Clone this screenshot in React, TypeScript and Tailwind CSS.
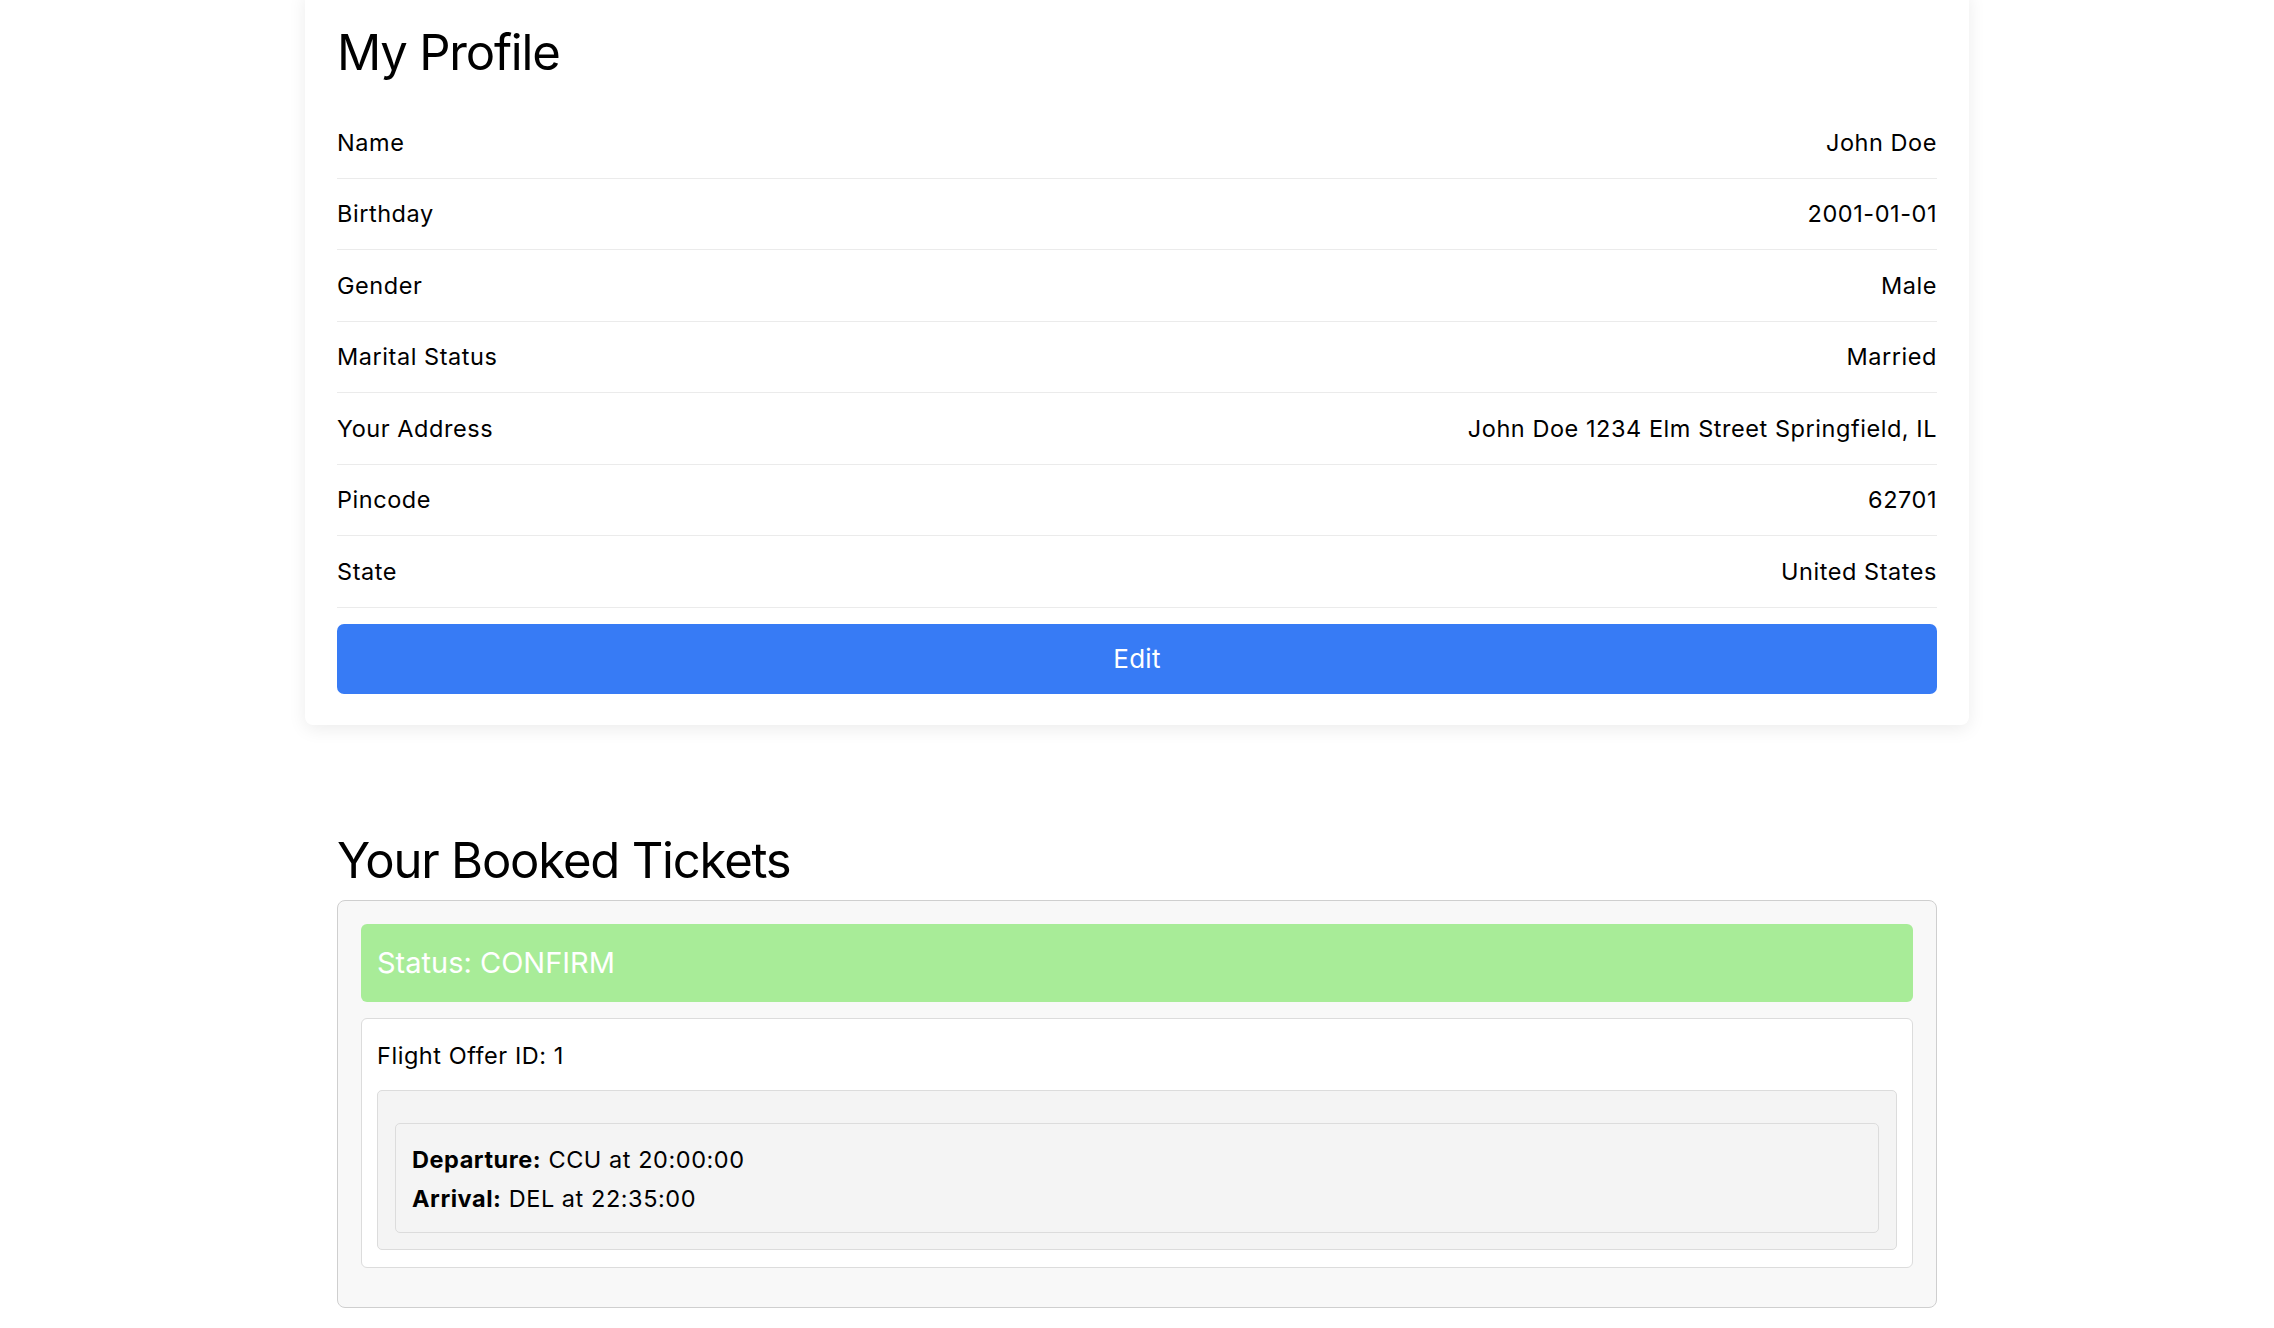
import React from "react";

const rows: [string, string][] = [
  ["Name", "John Doe"],
  ["Birthday", "2001-01-01"],
  ["Gender", "Male"],
  ["Marital Status", "Married"],
  ["Your Address", "John Doe 1234 Elm Street Springfield, IL"],
  ["Pincode", "62701"],
  ["State", "United States"],
];

export default function App() {
  return (
    <div
      className="min-h-screen bg-white text-black pb-[40px]"
      style={{ fontFamily: "Inter, 'Noto Sans', Arial, sans-serif" }}
    >
      <div className="w-[1664px] mx-auto -mt-[10px] bg-white rounded-[8px] shadow-[0_4px_18px_rgba(0,0,0,0.08)] px-[32px] pt-[32px] pb-[31px]">
        <h1 className="m-0 text-[49px] leading-[62px] font-normal tracking-[-1.2px]">My Profile</h1>
        <div className="mt-[23px]">
          {rows.map(([k, v]) => (
            <div
              key={k}
              className="h-[71.5px] border-b border-[#ebebeb] flex items-center justify-between text-[23.5px] leading-[35px] tracking-[0.55px]"
            >
              <span>{k}</span>
              <span>{v}</span>
            </div>
          ))}
        </div>
        <button className="mt-[16px] w-full h-[70px] rounded-[7px] bg-[#377bf5] text-white text-[26px] tracking-[0.3px] flex items-center justify-center">
          Edit
        </button>
      </div>

      <div className="w-[1600px] mx-auto mt-[105px]">
        <h2 className="m-0 text-[49px] leading-[62px] font-normal tracking-[-1.2px]">Your Booked Tickets</h2>
        <div className="mt-[8px] border border-[#cfcfcf] rounded-[8px] bg-[#f8f8f8] pt-[23px] px-[23px] pb-[39px]">
          <div className="h-[78px] rounded-[6px] bg-[#a8ec98] px-[16px] flex items-center text-white text-[29px]">
            Status: CONFIRM
          </div>
          <div className="mt-[16px] border border-[#dcdcdc] rounded-[6px] bg-white px-[15px] pt-[19px] pb-[17px]">
            <div className="text-[23.5px] leading-[35px] tracking-[0.55px]">Flight Offer ID: 1</div>
            <div className="mt-[17px] bg-[#f4f4f4] border border-[#dcdcdc] rounded-[5px] px-[17px] pt-[32px] pb-[16px]">
              <div className="border border-[#dcdcdc] rounded-[5px] bg-[#f4f4f4] px-[16px] pt-[16px] pb-[14px] text-[23.5px] leading-[39px] tracking-[0.55px]">
                <div>
                  <span className="font-bold">Departure:</span> CCU at 20:00:00
                </div>
                <div>
                  <span className="font-bold">Arrival:</span> DEL at 22:35:00
                </div>
              </div>
            </div>
          </div>
        </div>
      </div>
    </div>
  );
}
